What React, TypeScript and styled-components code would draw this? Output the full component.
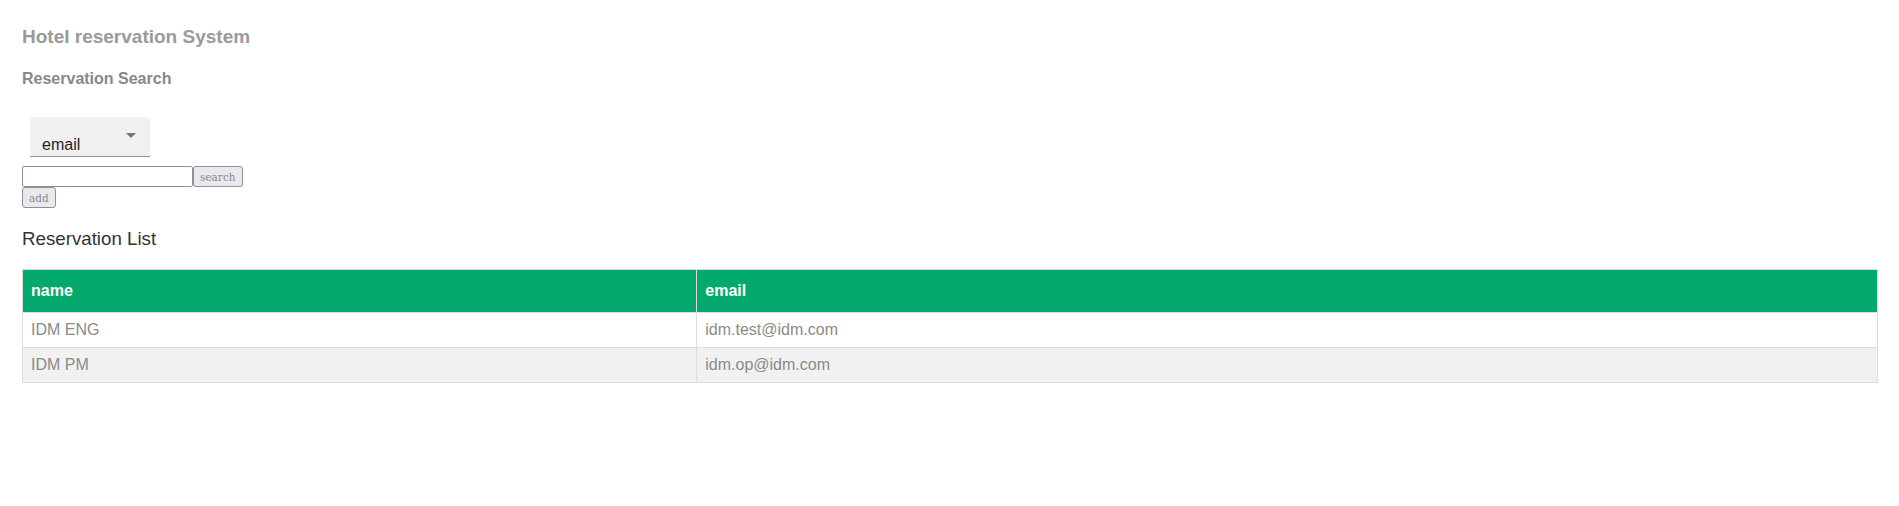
import styled, { createGlobalStyle } from "styled-components";

const GlobalStyle = createGlobalStyle`
  html, body {
    margin: 0;
    padding: 0;
    background: #ffffff;
  }
  body {
    font-family: "Liberation Sans", Arial, sans-serif;
  }
`;

type Reservation = { name: string; email: string };

const reservations: Reservation[] = [
  { name: "IDM ENG", email: "idm.test@idm.com" },
  { name: "IDM PM", email: "idm.op@idm.com" },
];

const App: React.FC = () => {
  return (
    <>
      <GlobalStyle />
      <Page>
        <Title>Hotel reservation System</Title>
        <SearchSection>
          <SubTitle>Reservation Search</SubTitle>
          <SelectBox>
            <SelectValue>email</SelectValue>
            <ArrowIcon viewBox="0 0 24 24" aria-hidden="true">
              <path d="M7 10l5 5 5-5z" />
            </ArrowIcon>
          </SelectBox>
          <SearchRow>
            <SearchInput type="text" />
            <FormButton>search</FormButton>
          </SearchRow>
          <FormButton>add</FormButton>
        </SearchSection>
        <ListTitle>Reservation List</ListTitle>
        <Table>
          <thead>
            <tr>
              <HeadCell $width="36.35%">name</HeadCell>
              <HeadCell>email</HeadCell>
            </tr>
          </thead>
          <tbody>
            {reservations.map((r) => (
              <Row key={r.email}>
                <Cell>{r.name}</Cell>
                <Cell>{r.email}</Cell>
              </Row>
            ))}
          </tbody>
        </Table>
      </Page>
    </>
  );
};

export default App;

const Page = styled.div`
  padding: 26px 21px 0 22px;
`;

const Title = styled.h1`
  margin: 0;
  font-size: 19px;
  line-height: 22px;
  font-weight: bold;
  color: #9a9a9a;
`;

const SearchSection = styled.div`
  display: flex;
  flex-direction: column;
  align-items: flex-start;
`;

const SubTitle = styled.h4`
  margin: 22px 0 21px;
  font-size: 16px;
  line-height: 18px;
  font-weight: bold;
  color: #888888;
`;

const SelectBox = styled.div`
  position: relative;
  box-sizing: border-box;
  display: flex;
  align-items: flex-end;
  width: 120px;
  height: 40px;
  margin: 8px 8px 9px;
  padding: 0 12px 2px;
  background: #f0f0f0;
  border-radius: 4px 4px 0 0;
  border-bottom: 1px solid #8f8f8f;
`;

const SelectValue = styled.span`
  font-size: 16px;
  line-height: 18px;
  color: #1f1f1f;
`;

const ArrowIcon = styled.svg`
  position: absolute;
  right: 7px;
  top: 6px;
  width: 24px;
  height: 24px;
  fill: #757575;
`;

const SearchRow = styled.div`
  display: flex;
`;

const SearchInput = styled.input`
  box-sizing: border-box;
  width: 171px;
  height: 21px;
  margin: 0;
  border: 1px solid #8f8f9d;
  border-radius: 2px;
  background: #ffffff;
`;

const FormButton = styled.button`
  box-sizing: border-box;
  height: 21px;
  margin: 0;
  padding: 0 6px;
  font-family: "DejaVu Serif", "Liberation Serif", serif;
  font-size: 10.5px;
  color: #8a8a8a;
  background: #e9e9ed;
  border: 1px solid #8f8f9d;
  border-radius: 3px;
`;

const ListTitle = styled.h3`
  margin: 20px 0 19px;
  font-size: 18.72px;
  line-height: 22px;
  font-weight: normal;
  color: #333333;
`;

const Table = styled.table`
  width: 100%;
  border-collapse: collapse;
  font-size: 16px;
  line-height: 18px;
`;

const HeadCell = styled.th<{ $width?: string }>`
  width: ${(p) => p.$width ?? "auto"};
  padding: 12px 8px;
  border: 1px solid #dddddd;
  background: #04aa6d;
  color: #ffffff;
  text-align: left;
  font-weight: bold;
`;

const Row = styled.tr`
  &:nth-child(even) {
    background: #f1f1f1;
  }
`;

const Cell = styled.td`
  padding: 8px;
  border: 1px solid #dddddd;
  color: #8a8a8a;
`;
